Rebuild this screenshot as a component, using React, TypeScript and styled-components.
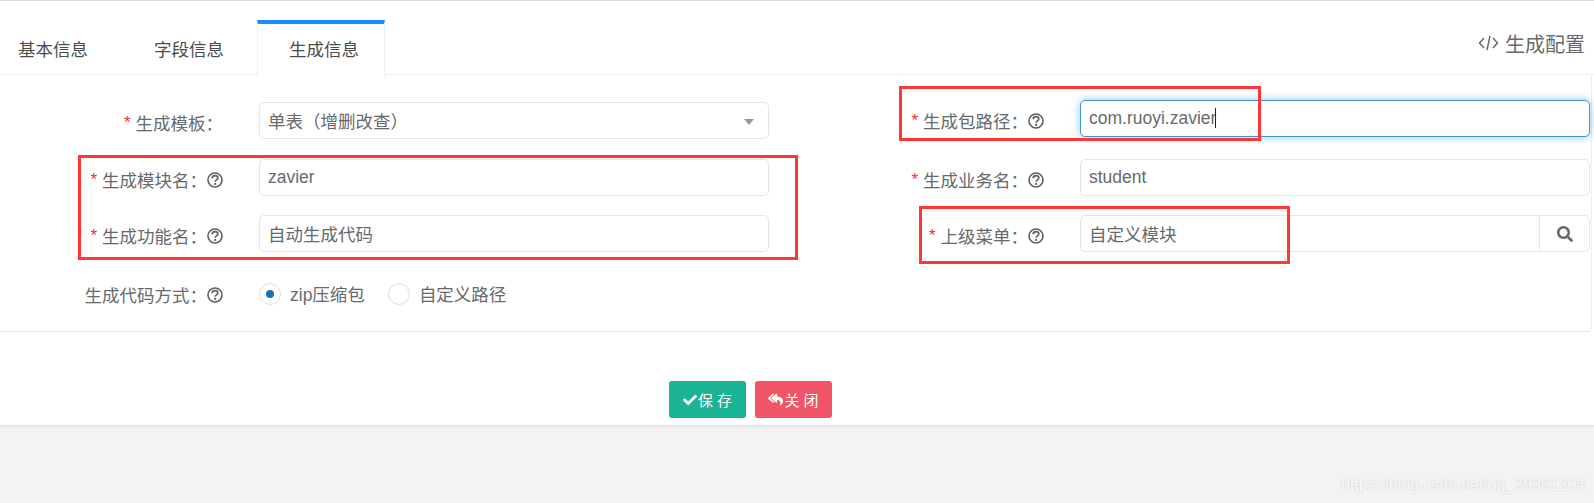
import React from "react";
import styled, { createGlobalStyle } from "styled-components";
import { FaCheck, FaReplyAll, FaSearch } from "react-icons/fa";

const GlobalStyle = createGlobalStyle`
  html, body {
    margin: 0;
    padding: 0;
    height: 503px;
    overflow: hidden;
    background: #f3f3f4;
    font-family: "Liberation Sans", "Noto Sans CJK SC", sans-serif;
    font-size: 17.5px;
    color: #676a6c;
  }
`;

const Page = styled.div`
  position: relative;
  width: 1594px;
  height: 503px;
  overflow: hidden;
`;

const Panel = styled.div`
  height: 424px;
  background: #fff;
  border-top: 1px solid #dcdcdc;
  border-bottom: 1px solid #e2e2e2;
  box-shadow: 0 1px 3px rgba(0, 0, 0, 0.06);
`;

const TabHeader = styled.div`
  padding-top: 19px;
  box-sizing: border-box;
  height: 74px;
  display: flex;
  justify-content: space-between;
  border-bottom: 1px solid #f0f0f0;
`;

const TabList = styled.div`
  display: flex;
`;

const Tab = styled.div<{ $active?: boolean; $first?: boolean }>`
  height: ${(p) => (p.$active ? "57px" : "54px")};
  box-sizing: border-box;
  padding: ${(p) => (p.$active ? "0 25px 0 31px" : p.$first ? "0 33px 0 18px" : "0 33px")};
  line-height: ${(p) => (p.$active ? "53px" : "60px")};
  color: #4a4c4e;
  background: #fff;
  position: relative;
  border-top: ${(p) => (p.$active ? "4px solid #1890ff" : "none")};
  border-left: ${(p) => (p.$active ? "1px solid #f0f0f0" : "none")};
  border-right: ${(p) => (p.$active ? "1px solid #f0f0f0" : "none")};
`;

const HeaderTitle = styled.div`
  display: flex;
  align-items: center;
  gap: 6px;
  height: 46px;
  padding-right: 9px;
  font-size: 20px;
  color: #676a6c;
`;

const Card = styled.div`
  width: 1592px;
  box-sizing: border-box;
  height: 257px;
  border-right: 1px solid #eeeeee;
  border-bottom: 1px solid #e7e7e7;
  border-bottom-right-radius: 4px;
  display: grid;
  grid-template-columns: 820px 771px;
`;

const Column = styled.div<{ $top: number; $controlEnd: number }>`
  padding-top: ${(p) => p.$top}px;
  padding-right: ${(p) => p.$controlEnd}px;
  display: flex;
  flex-direction: column;
`;

const Row = styled.div<{ $gap: number; $label: number }>`
  display: grid;
  grid-template-columns: ${(p) => p.$label}px 1fr;
  column-gap: 36px;
  margin-bottom: ${(p) => p.$gap}px;
`;

const Label = styled.div`
  height: 37px;
  padding-top: 2px;
  display: flex;
  align-items: center;
  justify-content: flex-end;
  white-space: nowrap;
`;

const Star = styled.span`
  color: #ff2a2a;
  font-size: 17px;
  margin-right: 5px;
`;

const Field = styled.div<{ $focus?: boolean }>`
  position: relative;
  height: 34px;
  display: flex;
  align-items: center;
  padding: 0 8px 1px;
  border: 1px solid ${(p) => (p.$focus ? "#3c95d3" : "#e5e6e7")};
  border-radius: 5px;
  box-shadow: ${(p) => (p.$focus ? "0 0 8px rgba(102, 175, 233, 0.7)" : "none")};
  background: #fff;
  white-space: nowrap;
`;

const Caret = styled.span`
  display: inline-block;
  width: 1px;
  height: 20px;
  background: #222;
  margin-left: -1px;
`;

const Arrow = styled.span`
  position: absolute;
  right: 14px;
  top: 16px;
  border-left: 5px solid transparent;
  border-right: 5px solid transparent;
  border-top: 6px solid #999;
`;

const SearchButton = styled.span`
  position: absolute;
  right: 0;
  top: 0;
  bottom: 0;
  width: 49px;
  border-left: 1px solid #e5e6e7;
  display: flex;
  align-items: center;
  justify-content: center;
  color: #676a6c;
`;

const RadioGroup = styled.div`
  display: flex;
  align-items: center;
  height: 37px;
  padding-top: 1px;
`;

const RadioDot = styled.span<{ $checked?: boolean }>`
  width: 22px;
  height: 22px;
  box-sizing: border-box;
  border: 1px solid #dfdfdf;
  border-radius: 50%;
  box-shadow: inset 0 0 2px rgba(0, 0, 0, 0.06);
  display: flex;
  align-items: center;
  justify-content: center;
  margin-right: 9px;

  &::after {
    content: "";
    width: 8px;
    height: 8px;
    border-radius: 50%;
    background: ${(p) => (p.$checked ? "#1272ad" : "transparent")};
  }
`;

const RadioText = styled.span`
  margin-right: 23px;
  white-space: nowrap;
`;

const Footer = styled.div`
  display: flex;
  gap: 9px;
  padding: 49px 0 0 669px;
`;

const Button = styled.div<{ $tone: "save" | "close" }>`
  width: 77px;
  height: 37px;
  display: flex;
  align-items: center;
  justify-content: center;
  gap: 1px;
  border-radius: 3px;
  font-size: 15px;
  color: #fff;
  white-space: pre;
  background: ${(p) => (p.$tone === "save" ? "#1ab394" : "#f05567")};
`;

// 빨간 표시 박스 (스크린샷 위에 그린 주석)
const Annotation = styled.div<{ $x: number; $y: number; $w: number; $h: number }>`
  position: absolute;
  left: ${(p) => p.$x}px;
  top: ${(p) => p.$y}px;
  width: ${(p) => p.$w}px;
  height: ${(p) => p.$h}px;
  box-sizing: border-box;
  border: 3px solid #ff3737;
  pointer-events: none;
`;

const Watermark = styled.div`
  position: absolute;
  right: 9px;
  top: 476px;
  font-size: 15.9px;
  color: #fafafa;
  text-shadow: 0 0 2px #c4c4c4;
`;

function HelpIcon() {
  return (
    <svg width="16" height="16" viewBox="0 0 16 16" fill="none" style={{ flex: "none" }}>
      <circle cx="8" cy="8" r="7" stroke="#5c5f61" strokeWidth="1.6" />
      <path
        d="M5.2 6.2C5.3 4.6 6.5 3.7 8 3.7c1.6 0 2.8.9 2.8 2.3 0 1.9-2.6 1.9-2.6 3.7"
        stroke="#5c5f61"
        strokeWidth="1.7"
      />
      <circle cx="8.2" cy="11.9" r="1.1" fill="#5c5f61" />
    </svg>
  );
}

function CodeIcon() {
  return (
    <svg width="21" height="18" viewBox="0 0 21 18" fill="none" stroke="#676a6c" strokeWidth="1.5">
      <path d="M6 4 1.5 9 6 14M15 4l4.5 5-4.5 5M12 2 9 16" />
    </svg>
  );
}

function FormLabel({ text, required, help }: { text: string; required?: boolean; help?: boolean }) {
  return (
    <Label>
      {required && <Star>*</Star>}
      {text}：{help && <HelpIcon />}
    </Label>
  );
}

function App() {
  return (
    <Page>
      <GlobalStyle />
      <Panel>
        <TabHeader>
          <TabList>
            <Tab $first>基本信息</Tab>
            <Tab>字段信息</Tab>
            <Tab $active>生成信息</Tab>
          </TabList>
          <HeaderTitle>
            <CodeIcon />
            生成配置
          </HeaderTitle>
        </TabHeader>
        <Card>
          <Column $top={27} $controlEnd={51}>
            <Row $label={223} $gap={18}>
              <FormLabel text="生成模板" required />
              <Field>
                单表（增删改查）
                <Arrow />
              </Field>
            </Row>
            <Row $label={223} $gap={17}>
              <FormLabel text="生成模块名" required help />
              <Field>zavier</Field>
            </Row>
            <Row $label={223} $gap={20}>
              <FormLabel text="生成功能名" required help />
              <Field>自动生成代码</Field>
            </Row>
            <Row $label={223} $gap={0}>
              <FormLabel text="生成代码方式" help />
              <RadioGroup>
                <RadioDot $checked />
                <RadioText>zip压缩包</RadioText>
                <RadioDot />
                <RadioText>自定义路径</RadioText>
              </RadioGroup>
            </Row>
          </Column>
          <Column $top={25} $controlEnd={1}>
            <Row $label={224} $gap={20}>
              <FormLabel text="生成包路径" required help />
              <Field $focus>
                com.ruoyi.zavier
                <Caret />
              </Field>
            </Row>
            <Row $label={224} $gap={17}>
              <FormLabel text="生成业务名" required help />
              <Field>student</Field>
            </Row>
            <Row $label={224} $gap={0}>
              <FormLabel text="上级菜单" required help />
              <Field>
                自定义模块
                <SearchButton>
                  <FaSearch size={16} />
                </SearchButton>
              </Field>
            </Row>
          </Column>
        </Card>
        <Footer>
          <Button $tone="save">
            <FaCheck size={14} />保 存
          </Button>
          <Button $tone="close">
            <FaReplyAll size={15} />关 闭
          </Button>
        </Footer>
      </Panel>
      <Annotation $x={78} $y={155} $w={720} $h={105} />
      <Annotation $x={899} $y={86} $w={362} $h={55} />
      <Annotation $x={919} $y={206} $w={371} $h={58} />
      <Watermark>https://blog.csdn.net/qq_39361204</Watermark>
    </Page>
  );
}

export default App;
